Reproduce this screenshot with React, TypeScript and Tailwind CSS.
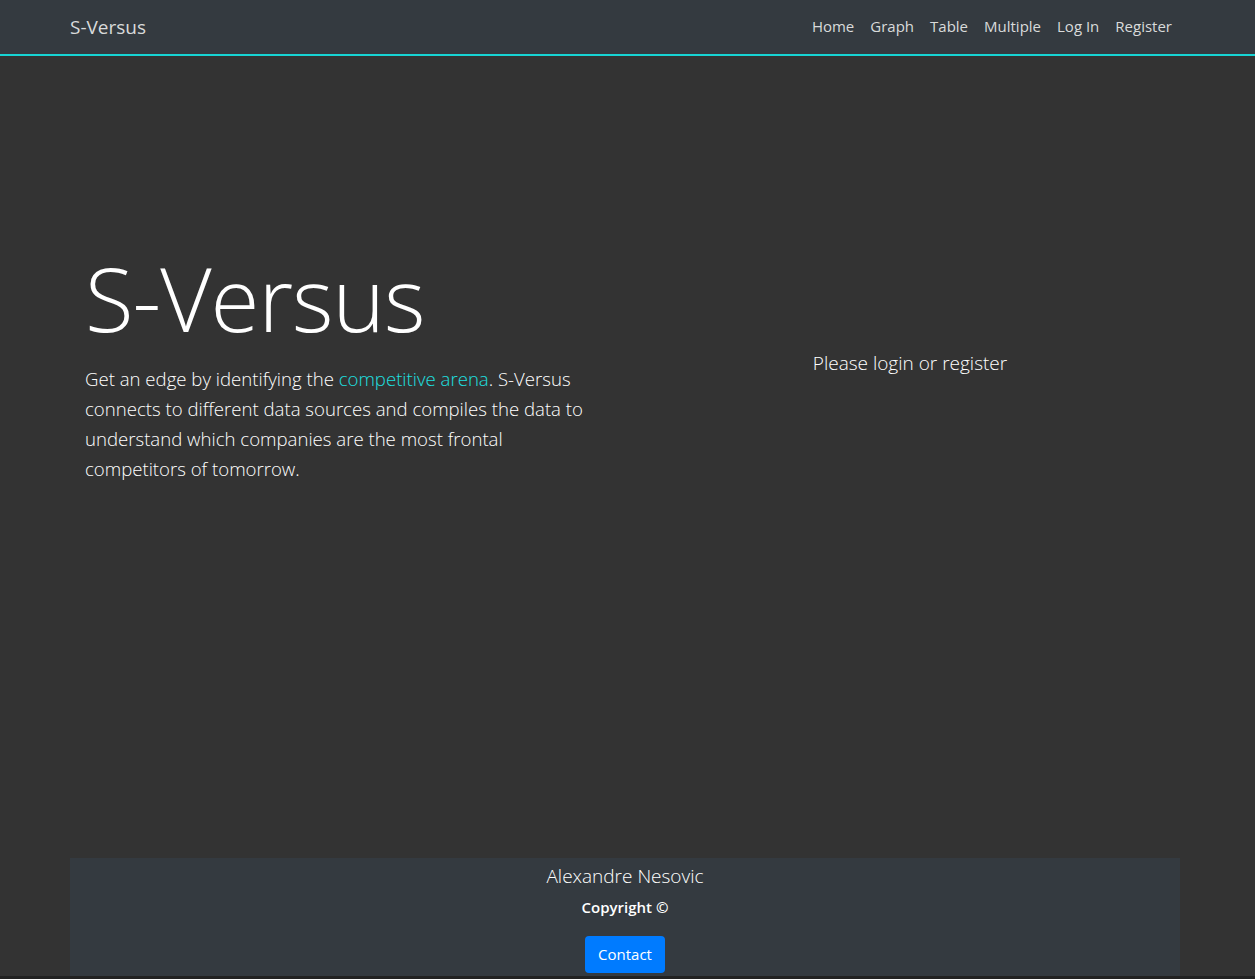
const links = ["Home", "Graph", "Table", "Multiple", "Log In", "Register"];

const App = () => {
  return (
    <div className="min-h-[979px] bg-[#333333] flex flex-col font-['Open_Sans',sans-serif] text-white">
      <nav className="h-[56px] bg-[#343a40] border-b-2 border-[#17d4d4]">
        <div className="ml-[70px] w-[1110px] h-[54px] flex items-center justify-between">
          <span className="text-[19px] text-[#d9dadb]">S-Versus</span>
          <ul className="flex items-center pb-[2px]">
            {links.map((l) => (
              <li key={l} className="px-2 text-[15px] text-[#d9dadb]">
                {l}
              </li>
            ))}
          </ul>
        </div>
      </nav>
      <main className="flex-1 flex">
        <div className="ml-[70px] w-[1110px] pt-[193px] flex items-center self-start">
          <div className="w-[555px] px-[15px]">
            <h1 className="text-[89px] font-light leading-[1.1] tracking-[-1px]">S-Versus</h1>
            <p className="max-w-[505px] text-[18.6px] font-light leading-[30px] mt-[17px]">
              Get an edge by identifying the <span className="text-[#1ee0e0]">competitive arena</span>. S-Versus
              connects to different data sources and compiles the data to understand which companies are the most
              frontal competitors of tomorrow.
            </p>
          </div>
          <div className="w-[555px] px-[15px] flex justify-center pb-[7px] pl-[30px]">
            <span className="text-[19px] font-light">Please login or register</span>
          </div>
        </div>
      </main>
      <footer className="ml-[70px] w-[1110px] h-[118px] bg-[#343a40] flex flex-col items-center pt-[4px]">
        <span className="text-[19px] font-light leading-[28px]">Alexandre Nesovic</span>
        <span className="text-[15px] font-semibold mt-[6px]">Copyright ©</span>
        <button className="mt-[17px] h-[37px] px-[13px] rounded bg-[#007bff] text-[15px] text-white">Contact</button>
      </footer>
      <div className="h-[3px] bg-[#222222]" />
    </div>
  );
};

export default App;
